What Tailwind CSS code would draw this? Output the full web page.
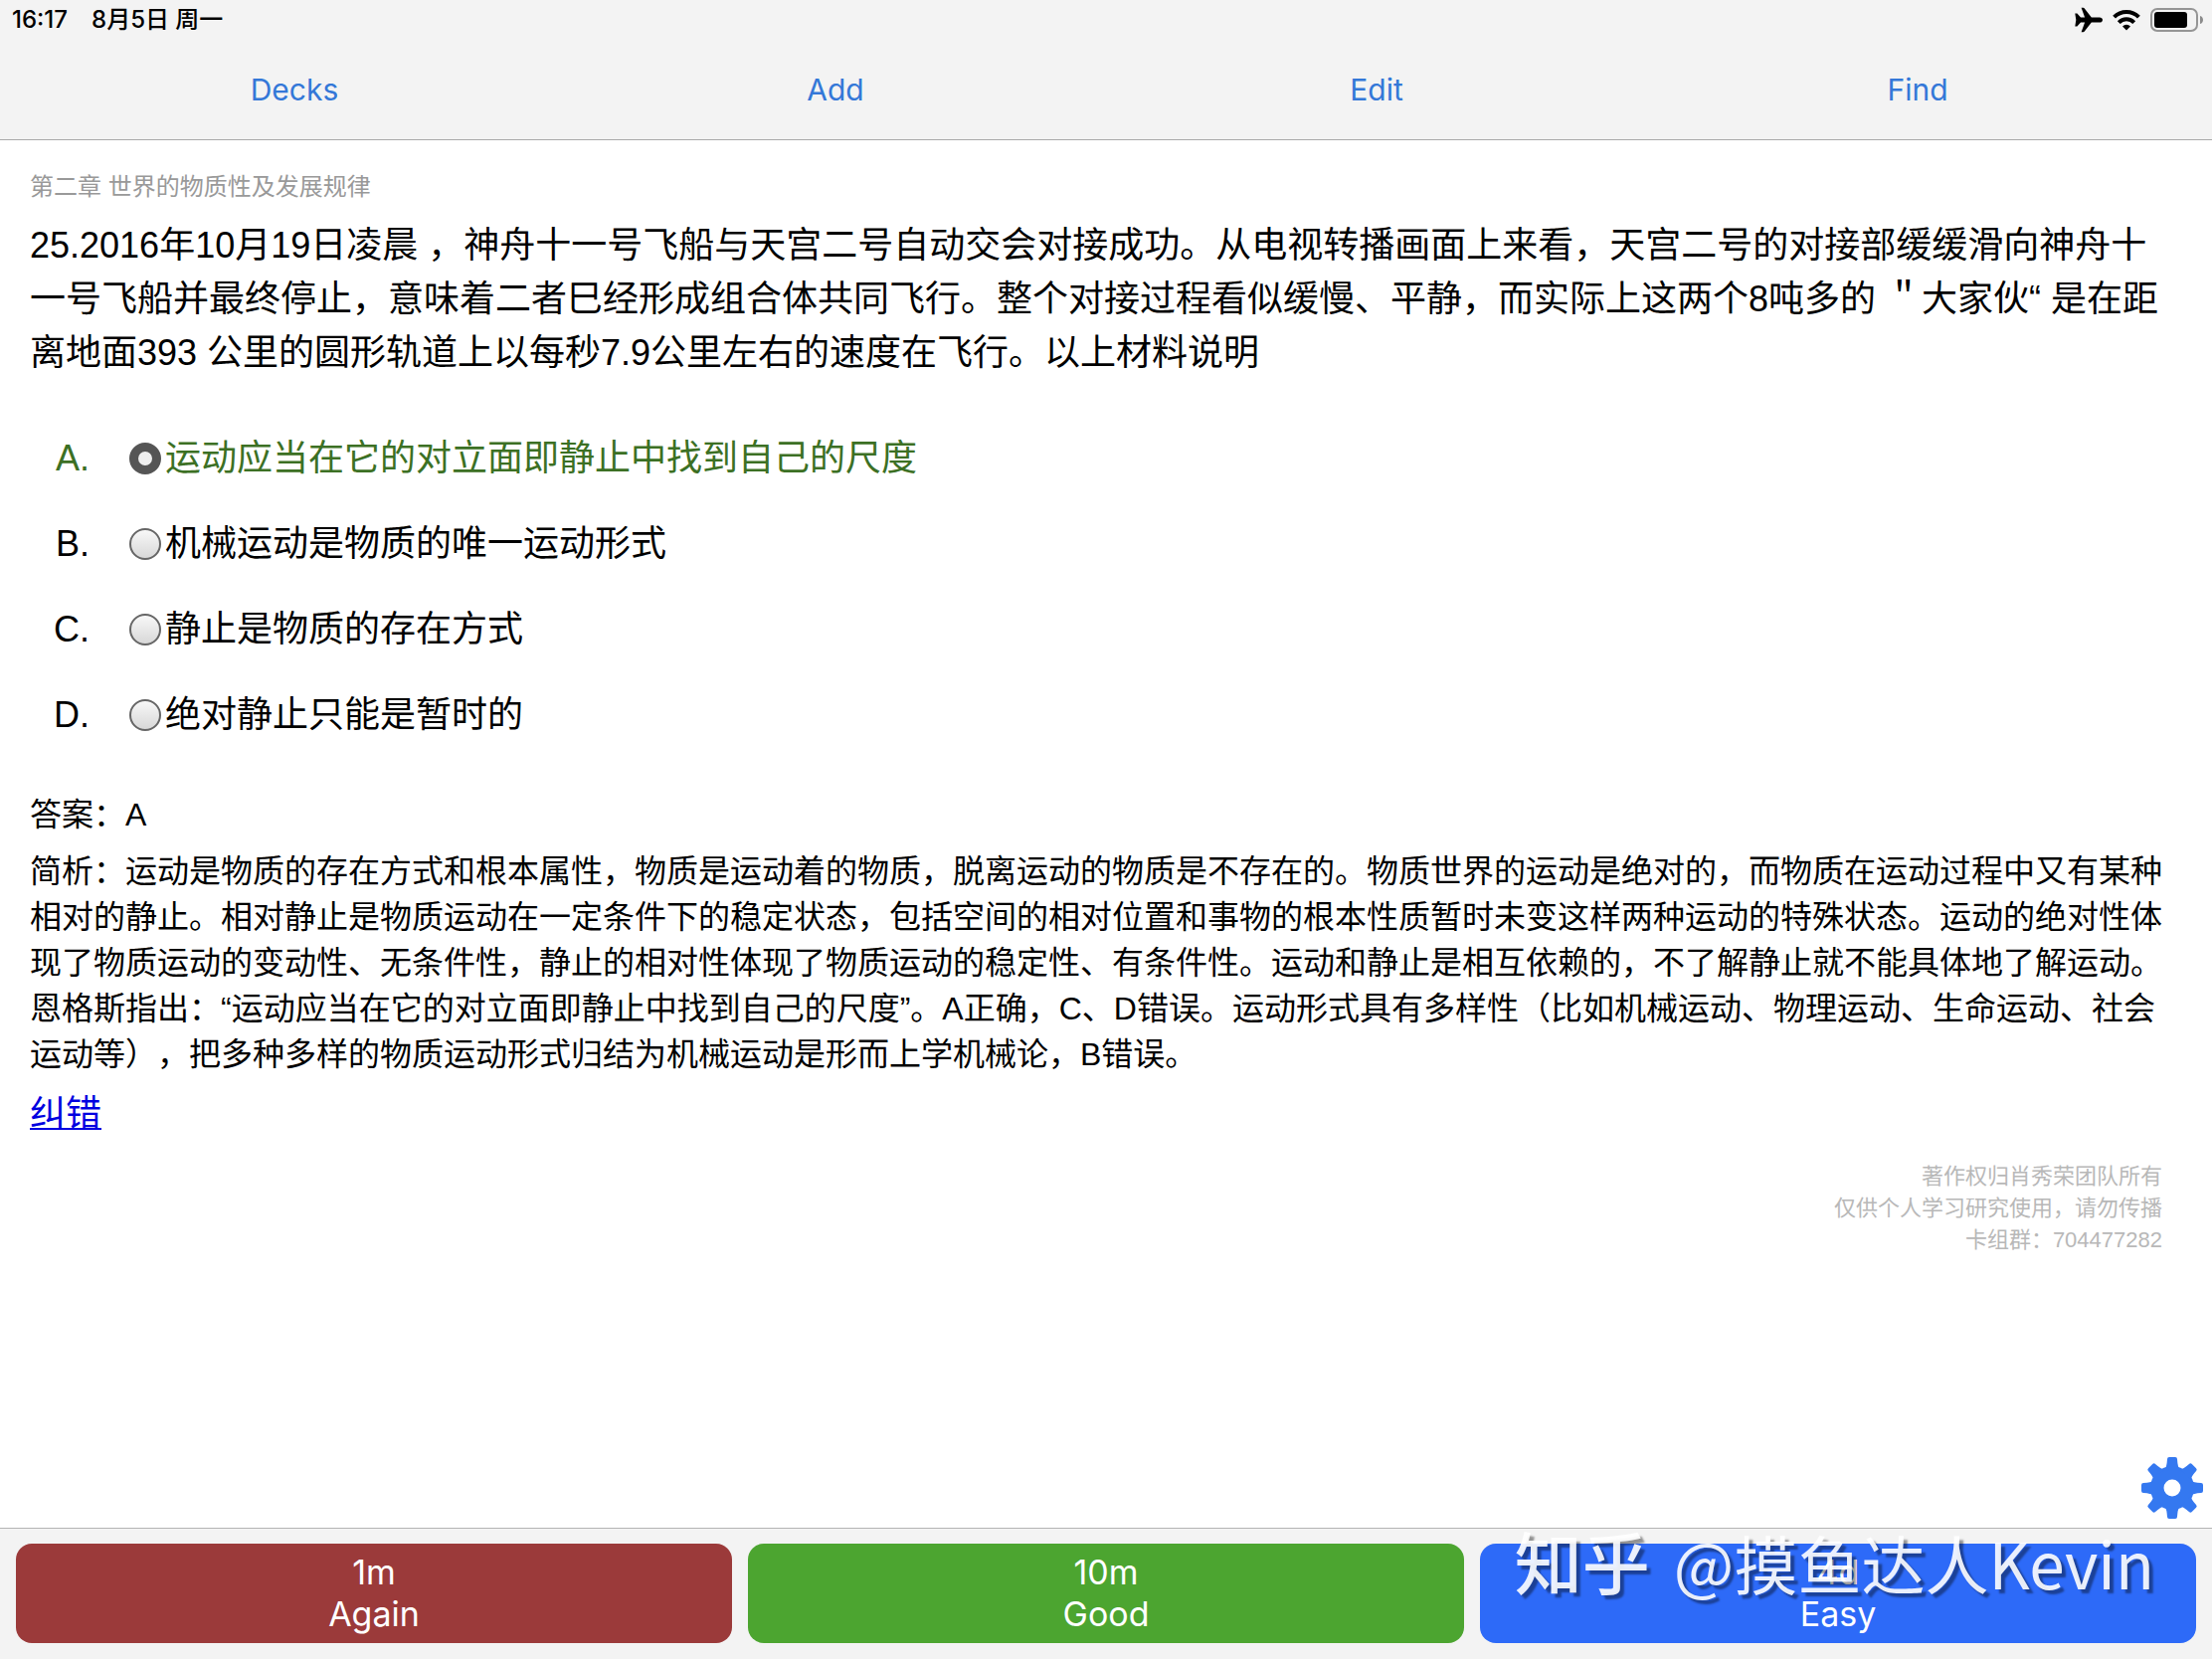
<!DOCTYPE html>
<html lang="zh-CN">
<head>
<meta charset="utf-8">
<meta name="viewport" content="width=device-width, initial-scale=1">
<title>第二章 世界的物质性及发展规律</title>
<script src="https://cdn.jsdelivr.net/npm/@tailwindcss/browser@4"></script>
</head>
<body class="bg-white text-black">
<div class="relative flex min-h-screen flex-col font-['Liberation_Sans','Noto_Sans_CJK_SC',sans-serif] [text-spacing-trim:space-all]">

  <header class="border-b border-[#a9a9a9] bg-[#f3f3f3] font-[Inter,'Noto_Sans_CJK_SC',sans-serif]">
    <div class="flex h-10 items-center justify-between pl-3 pr-2 text-2xl leading-10 font-medium">
      <div class="flex gap-6">
        <span>16:17</span>
        <span>8月5日 周一</span>
      </div>
      <div class="flex items-center gap-[10px]">
        <svg class="h-[26px] w-7" viewBox="0 0 28 26" aria-label="飞行模式"><path d="M28 13c0 1.6-1.4 2.6-3 2.6h-8.200L9.800 24.500q-.5.700-1.300.700H6.600l3.500-9.600H6L2.400 19.400H.300l1-6.400-1-6.400h2.100L6 10.400h4.100L6.600.800h1.900q.8 0 1.300.700l7 8.900H25c1.600 0 3 1 3 2.600z"/></svg>
        <svg class="h-[22px] w-7" viewBox="0 0 28 22" aria-label="Wi-Fi" fill="none" stroke="#000" stroke-width="4"><path d="M1.600 8.200a17.500 17.500 0 0 1 24.800 0"/><path d="M6.300 13.600a10.800 10.800 0 0 1 15.400 0"/><path d="M14 21.500l-4-4.100a5.700 5.700 0 0 1 8 0z" fill="#000" stroke="none"/></svg>
        <svg class="h-[26px] w-[54px]" viewBox="0 0 54 26" aria-label="电池"><rect x="1" y="2" width="46" height="22" rx="6" fill="none" stroke="#959595" stroke-width="2"/><rect x="4" y="5" width="33" height="16" rx="3"/><path d="M50 9c4 1 4 7 0 8z" fill="#8b8b8b"/></svg>
      </div>
    </div>
    <nav class="grid h-[100px] grid-cols-4 px-6 text-[30px] leading-[100px] text-[#3478d8]">
      <a href="#decks" class="text-center">Decks</a>
      <a href="#add" class="text-center">Add</a>
      <a href="#edit" class="text-center">Edit</a>
      <a href="#find" class="text-center">Find</a>
    </nav>
  </header>

  <main class="flex-1 pt-[29px] pr-[50px] pl-[30px]">
    <h1 class="text-2xl leading-9 text-[#999]">第二章 世界的物质性及发展规律</h1>
    <p class="mt-[14px] text-4xl leading-[54px]">25.2016年10月19日凌晨 ，神舟十一号飞船与天宫二号自动交会对接成功。从电视转播画面上来看，天宫二号的对接部缓缓滑向神舟十一号飞船并最终停止，意味着二者巳经形成组合体共同飞行。整个对接过程看似缓慢、平静，而实际上这两个8吨多的 ＂大家伙“ 是在距离地面393 公里的圆形轨道上以每秒7.9公里左右的速度在飞行。以上材料说明</p>

    <fieldset class="mt-[52px] flex flex-col gap-8 text-4xl leading-[54px]">
      <label class="flex items-center text-[#3c7024]"><span class="w-[60px] text-right">A.</span><input type="radio" name="answer" checked class="mr-1 ml-10 size-8 appearance-none rounded-full border-[9px] border-[#555] bg-[#eee]">运动应当在它的对立面即静止中找到自己的尺度</label>
      <label class="flex items-center"><span class="w-[60px] text-right">B.</span><input type="radio" name="answer" class="mr-1 ml-10 size-8 appearance-none rounded-full border-2 border-[#666] bg-linear-to-b from-[#f8f8f8] to-[#d8d8d8]">机械运动是物质的唯一运动形式</label>
      <label class="flex items-center"><span class="w-[60px] text-right">C.</span><input type="radio" name="answer" class="mr-1 ml-10 size-8 appearance-none rounded-full border-2 border-[#666] bg-linear-to-b from-[#f8f8f8] to-[#d8d8d8]">静止是物质的存在方式</label>
      <label class="flex items-center"><span class="w-[60px] text-right">D.</span><input type="radio" name="answer" class="mr-1 ml-10 size-8 appearance-none rounded-full border-2 border-[#666] bg-linear-to-b from-[#f8f8f8] to-[#d8d8d8]">绝对静止只能是暂时的</label>
    </fieldset>

    <section class="mt-[50px] text-[32px] leading-[46px]">
      <p>答案：A</p>
      <p class="mt-[11px]">简析：运动是物质的存在方式和根本属性，物质是运动着的物质，脱离运动的物质是不存在的。物质世界的运动是绝对的，而物质在运动过程中又有某种相对的静止。相对静止是物质运动在一定条件下的稳定状态，包括空间的相对位置和事物的根本性质暂时未变这样两种运动的特殊状态。运动的绝对性体现了物质运动的变动性、无条件性，静止的相对性体现了物质运动的稳定性、有条件性。运动和静止是相互依赖的，不了解静止就不能具体地了解运动。恩格斯指出：“运动应当在它的对立面即静止中找到自己的尺度”。A正确，C、D错误。运动形式具有多样性（比如机械运动、物理运动、生命运动、社会运动等），把多种多样的物质运动形式归结为机械运动是形而上学机械论，B错误。</p>
    </section>
    <p class="mt-3 text-4xl leading-[50px]"><a href="#report" class="text-[#0000e0] underline decoration-2 underline-offset-2 [text-decoration-skip-ink:none]">纠错</a></p>
    <p class="mt-[22px] text-right text-[22px] leading-8 text-[#b8b8b8]">著作权归肖秀荣团队所有<br>仅供个人学习研究使用，请勿传播<br>卡组群：704477282</p>
  </main>

  <div class="flex justify-end pr-2 pb-2">
    <button type="button" aria-label="设置" class="size-16">
      <svg class="size-16" viewBox="-32 -32 64 64" fill="#3478f0">
        <defs><path id="tooth" d="M-7.500-19Q-5.500-21-5-29Q-5-31-3-31H3Q5-31 5-29Q5.500-21 7.500-19z"/></defs>
        <path fill-rule="evenodd" d="M0-22A22 22 0 1 1 0 22A22 22 0 1 1 0-22zM0-8.500A8.500 8.500 0 1 0 0 8.500A8.500 8.500 0 1 0 0-8.500z"/>
        <use href="#tooth"/><use href="#tooth" transform="rotate(45)"/><use href="#tooth" transform="rotate(90)"/><use href="#tooth" transform="rotate(135)"/><use href="#tooth" transform="rotate(180)"/><use href="#tooth" transform="rotate(225)"/><use href="#tooth" transform="rotate(270)"/><use href="#tooth" transform="rotate(315)"/>
      </svg>
    </button>
  </div>

  <footer class="relative grid grid-cols-3 gap-4 border-t border-[#b4b4b4] bg-[#f3f3f3] px-4 pt-[15px] pb-4 font-[Inter,sans-serif] text-[34px] leading-[42px] text-white">
    <button type="button" class="h-[100px] rounded-2xl bg-[#9b3a3a]">1m<br>Again</button>
    <button type="button" class="h-[100px] rounded-2xl bg-[#4ca530]">10m<br>Good</button>
    <button type="button" class="h-[100px] rounded-2xl bg-[#2d6af8]">4d<br>Easy</button>
    <div class="pointer-events-none absolute -top-2 right-[58px] flex items-baseline gap-6 font-['Noto_Sans_CJK_SC',sans-serif] text-[64px] leading-[80px] whitespace-nowrap text-white/90 [text-shadow:4px_4px_2px_rgb(0_0_0/0.4)]"><span class="text-[68px] font-medium">知乎</span><span>@摸鱼达人Kevin</span></div>
  </footer>
</div>
</body>
</html>
